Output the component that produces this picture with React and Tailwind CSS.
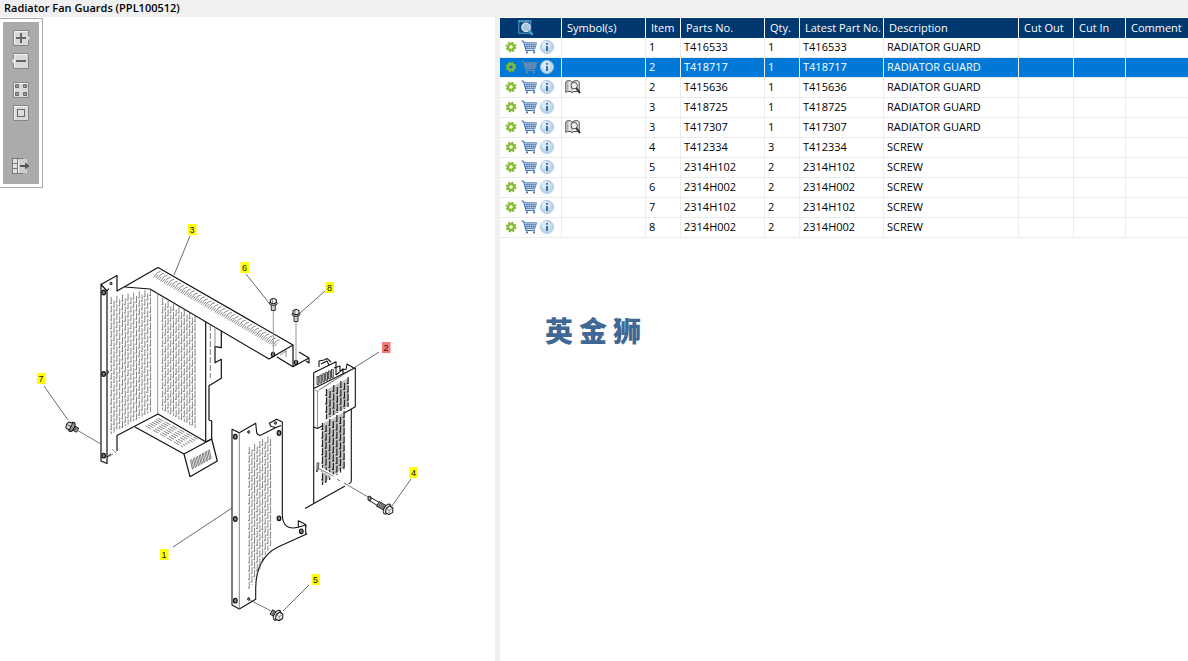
import React from 'react';
import clsx from 'clsx';

const columns = [
  { label: 'Symbol(s)', width: 'w-[84px]' },
  { label: 'Item', width: 'w-[35px]' },
  { label: 'Parts No.', width: 'w-[84px]' },
  { label: 'Qty.', width: 'w-[35px]' },
  { label: 'Latest Part No.', width: 'w-[84px]' },
  { label: 'Description', width: 'w-[135px]' },
  { label: 'Cut Out', width: 'w-[55px]' },
  { label: 'Cut In', width: 'w-[52px]' },
  { label: 'Comment', width: '' },
];

const parts = [
  { item: 1, no: 'T416533', qty: 1, description: 'RADIATOR GUARD' },
  { item: 2, no: 'T418717', qty: 1, description: 'RADIATOR GUARD', selected: true },
  { item: 2, no: 'T415636', qty: 1, description: 'RADIATOR GUARD', book: true },
  { item: 3, no: 'T418725', qty: 1, description: 'RADIATOR GUARD' },
  { item: 3, no: 'T417307', qty: 1, description: 'RADIATOR GUARD', book: true },
  { item: 4, no: 'T412334', qty: 3, description: 'SCREW' },
  { item: 5, no: '2314H102', qty: 2, description: 'SCREW' },
  { item: 6, no: '2314H002', qty: 2, description: 'SCREW' },
  { item: 7, no: '2314H102', qty: 2, description: 'SCREW' },
  { item: 8, no: '2314H002', qty: 2, description: 'SCREW' },
];

const callouts = [
  { n: 3, x: 192, y: 213, line: [190, 219, 174, 258] },
  { n: 6, x: 244.5, y: 251, line: [246, 257, 269, 286] },
  { n: 8, x: 329.5, y: 271, line: [325, 274, 300, 296] },
  { n: 2, x: 386, y: 331, line: [379, 335, 319, 373], selected: true },
  { n: 7, x: 41, y: 362, line: [44, 369, 68, 403] },
  { n: 4, x: 413.5, y: 456, line: [411, 462, 392, 489] },
  { n: 1, x: 164, y: 538, line: [173, 530, 232, 491] },
  { n: 5, x: 315.5, y: 563, line: [309, 568, 283, 594] },
];

/* ---------- icons ---------- */

const GearIcon = () => (
  <svg width="12" height="12" viewBox="0 0 12 12">
    <circle cx="6" cy="6" r="4.6" fill="none" stroke="#7ab530" strokeWidth="1.6" strokeDasharray="1.9 1.71" />
    <circle cx="6" cy="6" r="3" fill="none" stroke="#84bd2f" strokeWidth="2.4" />
  </svg>
);

const CartIcon = ({ dim }) => {
  const stroke = dim ? '#6f8aa8' : '#4a79b5';
  return (
    <svg width="17" height="14" viewBox="0 0 17 14" fill="none">
      <path d="M2.8 2.5H15.5L13.8 8.5H4.6Z" fill={dim ? '#4d86c0' : '#dbe8f5'} />
      <path d="M0.5 0.8L2.6 1.4L5 10.3H14" stroke={stroke} strokeWidth="1.2" />
      <path d="M2.8 2.7H15.6L14 8.5H4.6M3.5 4.7H15M4 6.6H14.5M6 3V8.5M8.3 3V8.5M10.6 3V8.5M13 3L12.6 8.5" stroke={stroke} strokeWidth="0.8" />
      <circle cx="6" cy="12.4" r="1.1" fill={stroke} />
      <circle cx="13" cy="12.4" r="1.1" fill={stroke} />
    </svg>
  );
};

const InfoIcon = () => (
  <svg width="14" height="14" viewBox="0 0 14 14">
    <circle cx="7" cy="7" r="6.5" fill="#bfd8ec" stroke="#a9c6e0" />
    <circle cx="5.8" cy="5.2" r="4" fill="#dcebf7" />
    <path d="M6 3H8V4.8H6ZM6 6H8V11H6Z" fill="#3f6fa8" />
  </svg>
);

const BookIcon = () => (
  <svg width="16" height="14" viewBox="0 0 16 14" fill="none" stroke="#4a4a45">
    <path d="M0.8 1.8L2.2 0.8H5.5L7.2 2.2V12.5L5.5 11.5H2.5L0.8 12.5Z" fill="#e8e8e4" />
    <path d="M7.2 2.2L9 0.8H13L14.2 2V11.5H9L7.2 12.5" fill="#f4f4f0" />
    <path d="M2.8 1.5V11" stroke="#999" />
    <circle cx="9.2" cy="5.6" r="3.2" fill="#eef2f4" />
    <path d="M11.2 8L15 13.2" stroke="#333" strokeWidth="2" />
  </svg>
);

const PreviewIcon = () => (
  <svg width="16" height="16" viewBox="0 0 16 16" fill="none">
    <rect x="0.7" y="0.7" width="12" height="12.6" fill="#0d4377" stroke="#3d8cbf" strokeWidth="1.2" />
    <path d="M1 1.5H12.5" stroke="#6db4dc" strokeWidth="1.6" strokeDasharray="1.4 0.7" />
    <circle cx="8" cy="7.4" r="4.2" fill="#a9c6da" stroke="#dde8ef" strokeWidth="1.2" />
    <path d="M11 10.8L14.6 14.8" stroke="#4ba2cf" strokeWidth="2.4" />
  </svg>
);

/* grey bevelled tile behind every toolbar glyph */
const Tile = ({ children, arrow }) => (
  <svg width="18" height="16" viewBox="0 0 18 16">
    <rect x="1.5" y="0.5" width="15" height="15" rx="0.5" fill="#d9d9d9" stroke="#858585" />
    <path d="M2.5 14V1.5H15.5" fill="none" stroke="#f4f4f4" />
    {arrow === 'right' && <path d="M16 5.5L18 8L16 10.5Z" fill="#e4e4e4" />}
    {arrow === 'left' && <path d="M2 5.5L0 8L2 10.5Z" fill="#e4e4e4" />}
    {children}
  </svg>
);

const ToolButton = ({ label, className, children }) => (
  <button type="button" aria-label={label} className={clsx('block h-4 w-[18px]', className)}>
    {children}
  </button>
);

const Toolbar = () => (
  <div className="absolute left-0 top-px border border-l-0 border-[#ababab] bg-white p-[3px]">
    <div className="flex w-9 flex-col items-center gap-[7px] bg-[#ababab] pb-[10px] pt-2">
      <ToolButton label="Zoom in">
        <Tile arrow="right"><path d="M4 8H14M9 3V13" stroke="#666" strokeWidth="2" /></Tile>
      </ToolButton>
      <ToolButton label="Zoom out">
        <Tile arrow="left"><path d="M4 8H14" stroke="#666" strokeWidth="2" /></Tile>
      </ToolButton>
      <ToolButton label="Fit to window" className="mt-[6px]">
        <Tile>
          <path d="M3.5 2.5H6.5V5.5H3.5ZM11.5 2.5H14.5V5.5H11.5ZM3.5 10.5H6.5V13.5H3.5ZM11.5 10.5H14.5V13.5H11.5Z" fill="#999" stroke="#666" />
        </Tile>
      </ToolButton>
      <ToolButton label="Actual size">
        <Tile><rect x="5.5" y="4.5" width="7" height="7" fill="#ddd" stroke="#666" /></Tile>
      </ToolButton>
      <ToolButton label="Hide panel" className="mt-[30px]">
        <svg width="18" height="16" viewBox="0 0 18 16" fill="none">
          <path d="M6 1H15V15H6Z" fill="#cfcfcf" />
          <rect x="0.5" y="0.5" width="5" height="15" fill="#e2e2e2" stroke="#777" />
          <path d="M1 5.5H5M1 10.5H5" stroke="#777" />
          <path d="M6 0.5H11M6 15.5H11" stroke="#777" />
          <path d="M6.5 1V15" stroke="#f4f4f4" />
          <path d="M8 8H14" stroke="#555" strokeWidth="2" />
          <path d="M13 4.5L17.5 8L13 11.5Z" fill="#555" />
        </svg>
      </ToolButton>
    </div>
  </div>
);

/* ---------- drawing ---------- */

/* Upright rows of slots between two slanted edges, staggered like bricks. */
const Slots = ({ x, count, step, top, bottom, width = 0.7, color = '#555' }) => (
  <g stroke={color}>
    {Array.from({ length: count }, (_, i) => {
      const t = i / (count - 1);
      const px = x + i * step;
      const y1 = top[0] + (top[1] - top[0]) * t + (i % 2) * 4;
      const y2 = bottom[0] + (bottom[1] - bottom[0]) * t;
      return (
        <g key={i}>
          <line x1={px} x2={px} y1={y1} y2={y2} strokeWidth={width} strokeDasharray="7 1.4" />
          <line x1={px - 0.7} x2={px - 0.7} y1={y1 + 5.8} y2={y2} strokeWidth={width} strokeDasharray="1.2 7.2" />
        </g>
      );
    })}
  </g>
);

const Hole = ({ x, y, r = 2 }) => (
  <ellipse cx={x} cy={y} rx={r * 0.9} ry={r * 1.15} fill="#888" stroke="#111" strokeWidth={r > 1.5 ? 1.2 : 0.8} />
);

const RadiatorGuard = () => (
  <g>
    <g strokeWidth="1.2">
      <path d="M101 266.5V444L107 446.5V274L101 267.5L117 258.5V274L158 250.5L293 328L269 342L150 272L125 270" />
      <path d="M107 274L109 271.5M117 434V418.5L158 397L206 425M205.7 305V425L211.7 422" />
      <path d="M135 410L184 437L211.7 422L217.3 444L190 459.7L184 437" />
      <path d="M211.7 422V404L209 403V368.7L221.3 361.3V342.3L215 345.7V329.7L221.3 330.7V313.5" />
      <path d="M277 340L293 349.7L309 341L299 335M293 328V349.7M309 341V346L306 344" />
    </g>
    <path d="M157.7 276V397M215 310V330M108 440L113 437M112 432L116 436M286 332V340M280 338L286 334" stroke="#777" strokeWidth="0.8" />
    <path d="M210.3 308V361" stroke="#555" strokeWidth="0.8" strokeDasharray="6 2" />
    <Slots x={111.3} count={15} step={2.8} top={[280, 272]} bottom={[417, 395]} />
    <Slots x={162.7} count={13} step={2.7} top={[281, 298]} bottom={[393, 411]} />
    <g stroke="#555" strokeWidth="0.7">
      {Array.from({ length: 36 }, (_, i) => (
        <path key={i} d={`M${153.5 + i * 3.4} ${260.5 + i * 1.95}l4 -5l3 -1M${155.5 + i * 3.4} ${261 + i * 1.95}l2.5 -3`} />
      ))}
    </g>
    <g stroke="#666" strokeWidth="0.8" strokeDasharray="6 2">
      {Array.from({ length: 7 }, (_, i) => (
        <line key={i} x1={146 + i * 2} y1={409 - i * 1.3} x2={183 + i * 2.4} y2={430 - i * 1.3} />
      ))}
    </g>
    <g stroke="#555" strokeWidth="0.8">
      {Array.from({ length: 7 }, (_, i) => (
        <path key={i} d={`M${190.5 + i * 2.9} ${443.5 - i * 1.6}l1.2 -1.2l2 8.5l-1.2 1.4Z`} />
      ))}
    </g>
    <Hole x={103.7} y={275.5} />
    <Hole x={103.7} y={357} />
    <Hole x={103.7} y={438.7} />
    <Hole x={111} y={266.5} r={1.2} />
    <path d="M106.5 354C109 353 109.5 356 107 357M107 440L111 437" />
    <Hole x={273} y={337.5} r={1.8} />
    <Hole x={296} y={345.5} r={1.8} />
  </g>
);

const SideGuard = () => (
  <g>
    <g strokeWidth="1.1">
      <path d="M313.7 410V487M313.7 371.5V355.7L336 344.7V358M351.3 392V464.5Q351 466 348 467.5M305 491.5L345 469" />
      <path d="M319 350V344L324 343L327 341.5L331 345M321 347L327 344L329 348M334 351L340 349V355M336 358L343 352V357M342 352L346 352.5L347 347L355.3 352" />
      <path d="M313.7 371.5L355.3 350.7V389.7L317.5 411.5L313.7 410Z" fill="#fff" />
    </g>
    <path d="M317.5 374V411M315 373L319 375" stroke="#777" strokeWidth="0.8" />
    <g stroke="#333" strokeWidth="0.9">
      {Array.from({ length: 6 }, (_, i) => (
        <path key={i} d={`M${317 + i * 2.9} ${359.5 - i * 1.4}h1.8v8h-1.8Z`} fill="#ddd" />
      ))}
    </g>
    <path d="M326 373L348.5 361V389L326 403Z" fill="#c4c4c4" stroke="none" />
    <Slots x={326.5} count={7} step={3.6} top={[372, 360]} bottom={[402, 390]} width={1.2} color="#222" />
    <path d="M322 407L344.5 395V450L322 467Z" fill="#c4c4c4" stroke="none" />
    <Slots x={322.5} count={7} step={3.6} top={[406, 394]} bottom={[468, 453]} width={1.2} color="#222" />
    {/* screw axis through the guard */}
    <path d="M318 450L349 469" stroke="#fff" strokeWidth="3.5" />
    <path d="M318 451L333 459M337 462L340 464M344 466L370 481" stroke="#555" strokeWidth="0.8" />
    <path d="M317 454V447Q317 445 319 446L318 453Q317.5 456 316 454Z" fill="#fff" stroke="#333" strokeWidth="0.9" />
  </g>
);

const FrontGuard = () => (
  <g>
    <g strokeWidth="1.1">
      <path d="M276 410.5L271 409.5L269.3 406.3L276.7 402.3L282.3 405V498Q283 514 298 510.3L305.7 508V516L306.7 517L278 530Q256 541 255.7 571V582.3L239.3 592L232 588V412.3L239.3 415.7L255.7 406.3L256.7 415.7Q257.5 418 260 418.5L276 410.5L281 408.5" />
      <path d="M298.3 510V503.7L305.7 507.5V510" />
    </g>
    <path d="M239.3 415.7V592" stroke="#777" strokeWidth="0.9" />
    <Slots x={249.3} count={5} step={2.65} top={[430, 424]} bottom={[573, 552]} />
    <Slots x={262.6} count={4} step={2.65} top={[422, 418]} bottom={[543, 529]} />
    <Hole x={235.3} y={419.7} />
    <Hole x={235.3} y={502} />
    <Hole x={235.3} y={583.7} />
    <Hole x={279} y={416} />
    <Hole x={279} y={501.3} />
    <Hole x={301.3} y={514.3} />
    <Hole x={248.7} y={415} r={1.2} />
    <Hole x={248.7} y={582} r={1.2} />
    <Hole x={275.5} y={406} r={1.2} />
    <path d="M250 583L271 594" stroke="#555" strokeWidth="0.8" />
  </g>
);

/* vertical flange screw, head up */
const TopScrew = ({ x, y, drop }) => (
  <g transform={`translate(${x} ${y})`} strokeWidth="1">
    <path d={`M0 9V${drop}`} stroke="#999" />
    <path d="M-2 3V8.5H2V3" fill="#ccc" stroke="#333" />
    <ellipse cx="0" cy="1.3" rx="4" ry="2" fill="#ddd" />
    <path d="M-3 1V-2.5Q0 -4.8 3 -2.5V1Q0 2.4 -3 1Z" fill="#eee" />
    <path d="M-1 -3.5V1.5" stroke="#555" strokeWidth="0.8" />
  </g>
);

const AngledScrew = ({ x, y, shaft = 8 }) => (
  <g transform={`translate(${x} ${y}) rotate(30)`} strokeWidth="1">
    <rect x={-shaft} y="-2.5" width={shaft} height="5" fill="#aaa" stroke="#222" />
    <path d={`M${-shaft + 2} -2V2M${-shaft + 4} -2V2M${-shaft + 6} -2V2`} stroke="#333" strokeWidth="0.8" />
    <ellipse cx="-0.5" cy="0" rx="3" ry="5.5" fill="#ddd" />
    <path d="M0 -4L4 -3.8L6 0L4 3.8L0 4L-1.5 0Z" fill="#f4f4f4" />
    <path d="M4 -3.5L2 0L4 3.5M2 0H-1" stroke="#555" strokeWidth="0.6" />
  </g>
);

const Drawing = () => (
  <svg viewBox="0 0 495 644" className="block h-auto w-full" fill="none" stroke="#111" strokeLinejoin="round">
    <RadiatorGuard />
    <SideGuard />
    <FrontGuard />

    <TopScrew x={273.3} y={285} drop={51} />
    <TopScrew x={296} y={296} drop={48} />
    <AngledScrew x={277.5} y={598.5} shaft={7} />
    <g strokeWidth="1">
      <path d="M370 480L381 486.5M368.5 483L379 489.5" stroke="#222" />
      <ellipse cx="369.5" cy="481.5" rx="1.6" ry="2.4" fill="#999" />
      <AngledScrew x={387.5} y={492.3} shaft={11} />
    </g>
    <g transform="translate(71 409.5) rotate(27)">
      <rect x="1" y="-2" width="6.5" height="4.5" fill="#aaa" stroke="#222" />
      <path d="M3 -2V2M5 -2V2" strokeWidth="0.8" />
      <ellipse cx="1" cy="0" rx="2.4" ry="5" fill="#999" />
      <path d="M0 -3.5L-4 -3L-5 0L-4 3.5L0 4Z" fill="#ddd" />
      <path d="M-4 0H0" strokeWidth="0.7" />
    </g>
    <path d="M78 413.7L101 427" stroke="#555" strokeWidth="0.8" />

    {callouts.map(({ n, x, y, line, selected }) => (
      <g key={n}>
        <line x1={line[0]} y1={line[1]} x2={line[2]} y2={line[3]} stroke="#444" strokeWidth="0.8" />
        <rect x={x - 4} y={y - 6} width="8.5" height="11" fill={selected ? '#f77b7b' : '#ffff00'} stroke="none" />
        <text
          x={x}
          y={y + 3}
          textAnchor="middle"
          stroke="none"
          fill="#111"
          className="font-['Liberation_Sans',sans-serif] text-[9px]"
        >
          {n}
        </text>
      </g>
    ))}
  </svg>
);

/* ---------- parts list ---------- */

const PartsTable = () => (
  <table className="w-full table-fixed border-separate border-spacing-0 text-left">
    <thead>
      <tr className="bg-[#00386f] text-white">
        <th className="h-5 w-[62px] border-r border-white p-0" aria-label="Actions">
          <div className="flex justify-center pr-[10px]">
            <PreviewIcon />
          </div>
        </th>
        {columns.map(({ label, width }) => (
          <th key={label} className={clsx('h-5 whitespace-nowrap border-r border-white p-0 pl-[5px] font-normal last:border-r-0', width)}>
            {label}
          </th>
        ))}
      </tr>
    </thead>
    <tbody>
      {parts.map(({ item, no, qty, description, selected, book }, i) => (
        <tr
          key={i}
          className={clsx(
            '*:h-5 *:border-b *:border-r *:border-[#ececec] *:p-0 *:pb-0.5 *:pl-[3px] *:last:border-r-0',
            selected && 'bg-[#0078d7] text-white'
          )}
        >
          <td>
            <div className="flex items-center gap-1 pl-0.5">
              <button type="button" aria-label="Options"><GearIcon /></button>
              <button type="button" aria-label="Add to cart"><CartIcon dim={selected} /></button>
              <button type="button" aria-label="Details" className="-ml-0.5"><InfoIcon /></button>
            </div>
          </td>
          <td>{book && <BookIcon />}</td>
          <td>{item}</td>
          <td>{no}</td>
          <td>{qty}</td>
          <td>{no}</td>
          <td className="whitespace-nowrap">{description}</td>
          <td />
          <td />
          <td />
        </tr>
      ))}
    </tbody>
  </table>
);

export default function App() {
  return (
    <div className="flex min-h-screen flex-col bg-white font-['Open_Sans','Noto_Sans',sans-serif] text-[11px] leading-4 text-black">
      <h1 className="h-[17px] bg-[#f0f0f0] pl-1 font-semibold leading-[15px]">Radiator Fan Guards (PPL100512)</h1>
      <div className="flex grow">
        <section className="relative w-5/12 shrink-0">
          <Drawing />
          <Toolbar />
        </section>
        <div className="w-[5px] shrink-0 bg-[#f0f0f0]" />
        <section className="min-w-0 grow pt-px">
          <PartsTable />
          <p className="ml-[45px] mt-[74px] flex gap-[6px] font-['Noto_Sans_CJK_SC',sans-serif] text-[28px] font-black leading-9 text-[#3f6894]">
            <span>英</span>
            <span>金</span>
            <span>狮</span>
          </p>
        </section>
      </div>
    </div>
  );
}
